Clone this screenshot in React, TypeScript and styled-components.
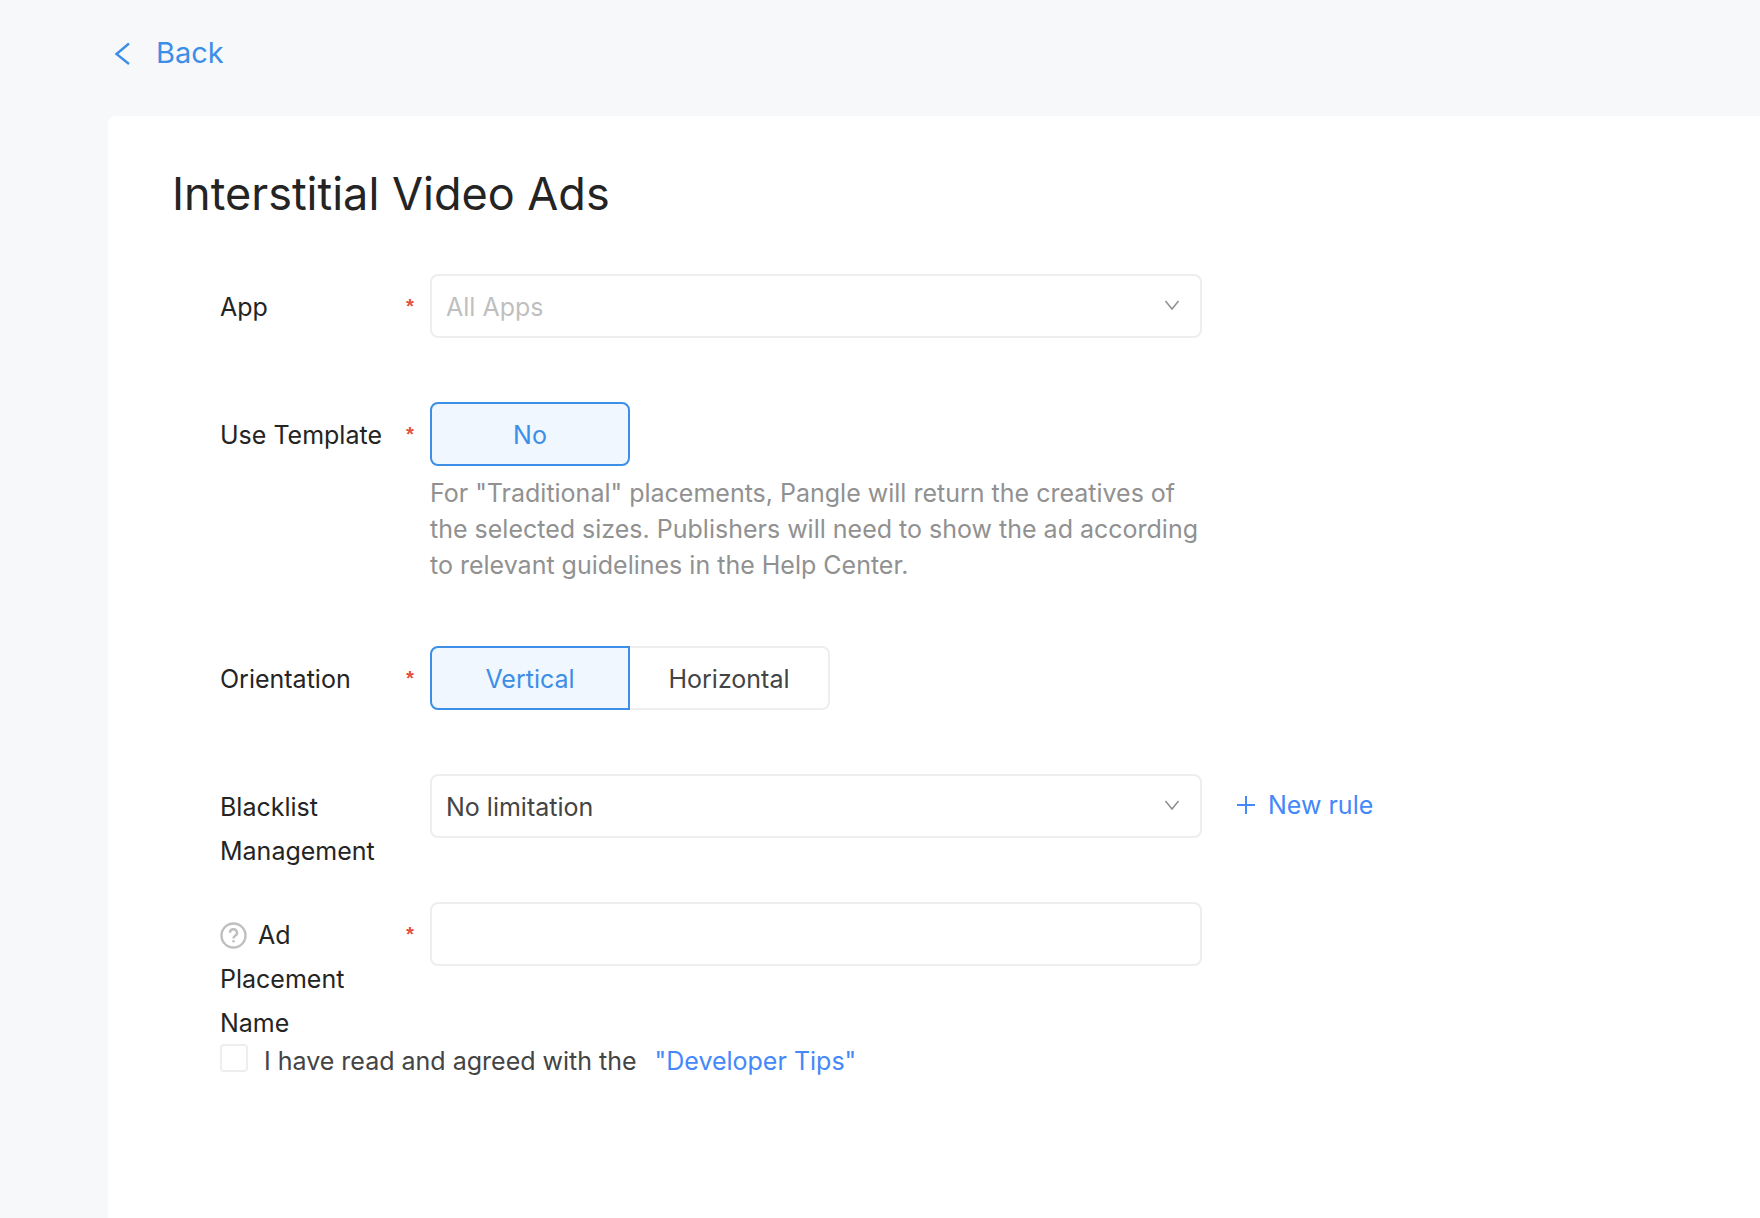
import React, { useState } from "react";
import styled, { createGlobalStyle, css } from "styled-components";

const GlobalStyle = createGlobalStyle`
  *, *::before, *::after { box-sizing: border-box; }
  body {
    margin: 0;
    background: #f7f8fa;
    color: #242424;
    font-family: Inter, "Liberation Sans", sans-serif;
    font-size: 25px;
  }
  button, input, select { font: inherit; color: inherit; }
`;

const Page = styled.div`
  display: flex;
  flex-direction: column;
  min-height: 100vh;
  padding-left: 108px;
`;

const TopBar = styled.header`
  display: flex;
  align-items: center;
  height: 116px;
  padding: 0 6px 10px;
`;

const BackLink = styled.a`
  display: inline-flex;
  align-items: center;
  gap: 26px;
  color: #3c8ee6;
  font-size: 29px;
  line-height: 40px;
  text-decoration: none;
`;

const Card = styled.main`
  flex: 1;
  padding: 46px 64px 64px;
  border-top-left-radius: 8px;
  background: #fff;
`;

const Title = styled.h1`
  margin: 0 0 48px;
  font-size: 45px;
  font-weight: 400;
  line-height: 64px;
`;

const Form = styled.form`
  display: flex;
  flex-direction: column;
  padding-left: 48px;
`;

const Row = styled.div`
  display: flex;
  align-items: flex-start;
`;

const LabelCell = styled.div`
  display: flex;
  flex: 0 0 210px;
  justify-content: space-between;
  padding: 11px 14px 0 0;
  line-height: 44px;
`;

const labelText = css`
  max-width: 176px;
  margin-bottom: -1px;
`;

const Label = styled.label`
  ${labelText}
`;

const GroupLabel = styled.span`
  ${labelText}
`;

const Required = styled.span`
  padding-top: 2px;
  color: #e2503f;
  font-family: "Liberation Mono", monospace;
  font-size: 20px;
  font-weight: 700;
`;

const Control = styled.div`
  flex: 0 1 772px;
  min-width: 0;
  padding-bottom: 64px;
`;

const field = css`
  display: block;
  width: 100%;
  height: 64px;
  padding: 2px 14px 0;
  border: 2px solid #eeeeee;
  border-radius: 8px;
  background: #fff;
  outline: none;
  &:focus-visible { border-color: #3c8ee6; }
`;

const SelectBox = styled.div`
  position: relative;
`;

const Select = styled.select<{ $empty?: boolean }>`
  ${field}
  appearance: none;
  color: ${(p) => (p.$empty ? "#bfbfbf" : "#444444")};
`;

const Chevron = styled.svg`
  position: absolute;
  top: 26px;
  right: 22px;
  pointer-events: none;
`;

const TextInput = styled.input`
  ${field}
`;

const Segments = styled.div`
  display: flex;
`;

const Segment = styled.button<{ $active: boolean }>`
  width: 200px;
  height: 64px;
  padding: 2px 0 0;
  border: 2px solid ${(p) => (p.$active ? "#3c8ee6" : "#eeeeee")};
  background: ${(p) => (p.$active ? "#f0f7ff" : "#fff")};
  color: ${(p) => (p.$active ? "#3c8ee6" : "#444444")};
  cursor: pointer;
  &:first-child { border-radius: 8px 0 0 8px; }
  &:last-child { border-radius: 0 8px 8px 0; }
  &:only-child { border-radius: 8px; }
  &:not(:first-child) { border-left-width: ${(p) => (p.$active ? "2px" : "0")}; }
  &:not(:last-child) { border-right-width: ${(p) => (p.$active ? "2px" : "0")}; }
`;

const Help = styled.p`
  margin: 9px 0 -1px;
  color: #919191;
  line-height: 36px;
`;

const NewRule = styled.button`
  display: inline-flex;
  flex: none;
  align-items: center;
  gap: 12px;
  height: 64px;
  margin-left: 34px;
  padding: 0 0 2px;
  border: 0;
  background: none;
  color: #4488fa;
  cursor: pointer;
`;

const HelpIcon = styled.svg`
  margin-right: 11px;
  vertical-align: -5px;
`;

const Agreement = styled.div`
  display: flex;
  align-items: flex-start;
  color: #444444;
  line-height: 34px;
`;

const Checkbox = styled.input`
  appearance: none;
  width: 28px;
  height: 28px;
  margin: 0 16px 0 0;
  border: 2px solid #eeeeee;
  border-radius: 4px;
  background: #fff;
  &:checked { border-color: #3c8ee6; background: #3c8ee6; }
`;

const TipsLink = styled.a`
  margin-left: 18px;
  color: #4488fa;
  text-decoration: none;
`;

function SelectField({ id, value, empty }: { id: string; value: string; empty?: boolean }) {
  return (
    <SelectBox>
      <Select id={id} $empty={empty} defaultValue={value}>
        <option value={value}>{value}</option>
      </Select>
      <Chevron width="16" height="11" viewBox="0 0 16 11" fill="none" stroke="#8f8f8f" strokeWidth="1.5">
        <path d="M1.5 1 8 9l6.5-8" />
      </Chevron>
    </SelectBox>
  );
}

function SegmentField({ labelledBy, options }: { labelledBy: string; options: string[] }) {
  const [active, setActive] = useState(options[0]);
  return (
    <Segments role="group" aria-labelledby={labelledBy}>
      {options.map((option) => (
        <Segment
          key={option}
          type="button"
          $active={option === active}
          aria-pressed={option === active}
          onClick={() => setActive(option)}
        >
          {option}
        </Segment>
      ))}
    </Segments>
  );
}

export default function App() {
  return (
    <>
      <GlobalStyle />
      <Page>
        <TopBar>
          <BackLink href="#">
            <svg width="16" height="24" viewBox="0 0 16 24" fill="none" stroke="currentColor" strokeWidth="2.4">
              <path d="M15 2.5 2.5 13 15 23" />
            </svg>
            Back
          </BackLink>
        </TopBar>
        <Card>
          <Title>Interstitial Video Ads</Title>
          <Form onSubmit={(e) => e.preventDefault()}>
            <Row>
              <LabelCell>
                <Label htmlFor="app">App</Label>
                <Required>*</Required>
              </LabelCell>
              <Control>
                <SelectField id="app" value="All Apps" empty />
              </Control>
            </Row>
            <Row>
              <LabelCell>
                <GroupLabel id="template">Use Template</GroupLabel>
                <Required>*</Required>
              </LabelCell>
              <Control>
                <SegmentField labelledBy="template" options={["No"]} />
                <Help>
                  For "Traditional" placements, Pangle will return the creatives of the selected sizes. Publishers
                  will need to show the ad according to relevant guidelines in the Help Center.
                </Help>
              </Control>
            </Row>
            <Row>
              <LabelCell>
                <GroupLabel id="orientation">Orientation</GroupLabel>
                <Required>*</Required>
              </LabelCell>
              <Control>
                <SegmentField labelledBy="orientation" options={["Vertical", "Horizontal"]} />
              </Control>
            </Row>
            <Row>
              <LabelCell>
                <Label htmlFor="blacklist">Blacklist Management</Label>
              </LabelCell>
              <Control>
                <SelectField id="blacklist" value="No limitation" />
              </Control>
              <NewRule type="button">
                <svg width="20" height="20" viewBox="0 0 20 20" stroke="currentColor" strokeWidth="2">
                  <path d="M10 1v18M1 10h18" />
                </svg>
                New rule
              </NewRule>
            </Row>
            <Row>
              <LabelCell>
                <Label htmlFor="placement">
                  <HelpIcon width="27" height="27" viewBox="0 0 27 27" fill="none" stroke="#bfbfbf" strokeWidth="2.4">
                    <circle cx="13.5" cy="13.5" r="12" />
                    <path d="M10 10.8a3.5 3.5 0 1 1 5.2 3c-1.2.7-1.7 1.2-1.7 2.6" />
                    <circle cx="13.5" cy="19.3" r="1.3" fill="#bfbfbf" stroke="none" />
                  </HelpIcon>
                  Ad Placement Name
                </Label>
                <Required>*</Required>
              </LabelCell>
              <Control>
                <TextInput id="placement" type="text" />
              </Control>
            </Row>
            <Agreement>
              <Checkbox id="agree" type="checkbox" />
              <label htmlFor="agree">I have read and agreed with the</label>
              <TipsLink href="#">"Developer Tips"</TipsLink>
            </Agreement>
          </Form>
        </Card>
      </Page>
    </>
  );
}
